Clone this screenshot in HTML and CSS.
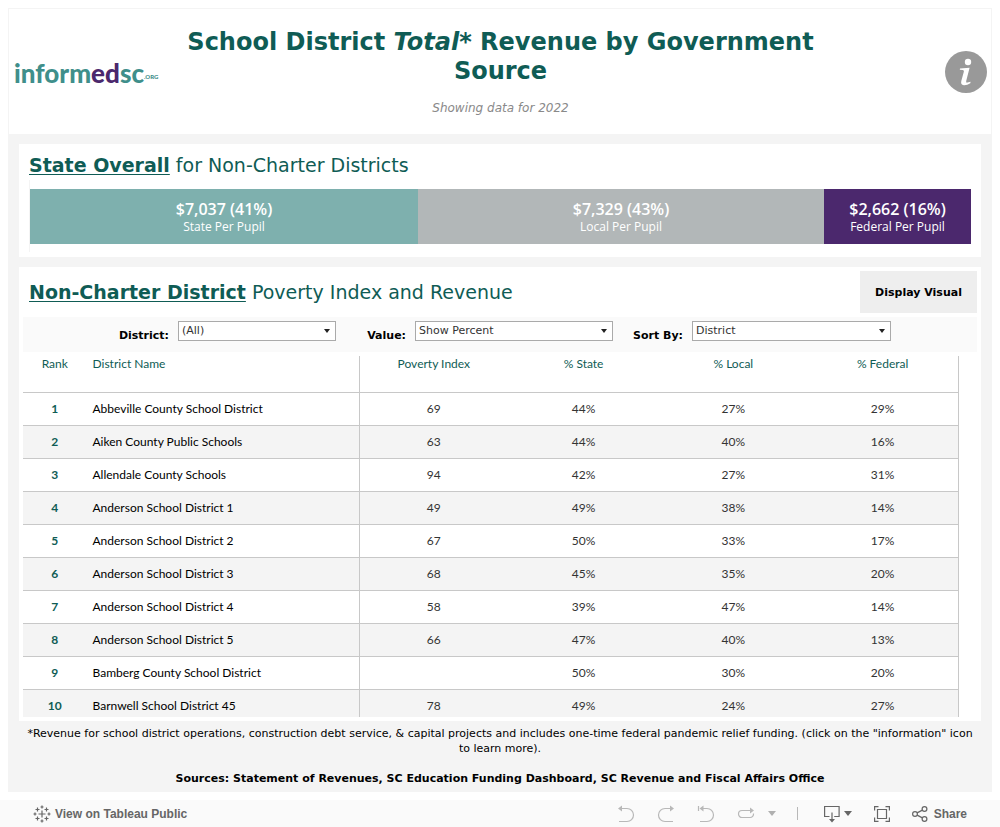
FILE: index.html
```html
<!DOCTYPE html>
<html lang="en">
<head>
<meta charset="utf-8">
<title>School District Total Revenue by Government Source</title>
<link rel="stylesheet" href="styles.css">
</head>
<body class="page">
<main class="dashboard">
  <header class="header">
    <div class="logo"><span>inform</span><span class="logo-accent">ed</span><span>sc</span><small class="logo-org">.ORG</small></div>
    <div class="heading">
      <h1 class="title">School District <em>Total</em>* Revenue by Government Source</h1>
      <p class="subtitle">Showing data for 2022</p>
    </div>
    <button class="info" aria-label="Information">
      <svg width="42" height="42" viewBox="0 0 42 42" aria-hidden="true">
        <circle cx="21" cy="21" r="21" fill="#999"/>
        <circle cx="23" cy="11" r="3.2" fill="#fff"/>
        <path d="M15 17.6L24.6 16.8L21.2 30Q20.8 32 22.4 31.6L25.6 30.8L25.3 32.3Q22 34.4 18.8 34.2Q15.4 33.8 16.3 30L18.9 20.4Q19.2 19 17.6 18.9L14.8 18.8Z" fill="#fff"/>
      </svg>
    </button>
  </header>

  <section class="panel overall">
    <h2 class="panel-title"><strong>State Overall</strong> for Non-Charter Districts</h2>
    <div class="bars">
      <div class="bar bar-state" style="flex-grow:388"><b>$7,037 (41%)</b><span>State Per Pupil</span></div>
      <div class="bar bar-local" style="flex-grow:406"><b>$7,329 (43%)</b><span>Local Per Pupil</span></div>
      <div class="bar bar-federal" style="flex-grow:147"><b>$2,662 (16%)</b><span>Federal Per Pupil</span></div>
    </div>
  </section>

  <section class="panel districts">
    <div class="districts-head">
      <h2 class="panel-title"><strong>Non-Charter District</strong> Poverty Index and Revenue</h2>
      <button class="display-button">Display Visual</button>
    </div>
    <form class="filters">
      <div class="filter filter-district"><label for="district">District:</label><div class="select"><select id="district"><option>(All)</option></select></div></div>
      <div class="filter filter-value"><label for="value">Value:</label><div class="select"><select id="value"><option>Show Percent</option></select></div></div>
      <div class="filter filter-sort"><label for="sort">Sort By:</label><div class="select"><select id="sort"><option>District</option></select></div></div>
    </form>
    <div class="table-scroll">
      <table class="table">
        <colgroup><col class="col-rank"><col class="col-name"><col class="col-num"><col class="col-num"><col class="col-num"><col class="col-num"></colgroup>
        <thead><tr><th>Rank</th><th class="name">District Name</th><th>Poverty Index</th><th>% State</th><th>% Local</th><th>% Federal</th></tr></thead>
        <tbody>
          <tr><td class="rank">1</td><td class="name">Abbeville County School District</td><td>69</td><td>44%</td><td>27%</td><td>29%</td></tr>
          <tr><td class="rank">2</td><td class="name">Aiken County Public Schools</td><td>63</td><td>44%</td><td>40%</td><td>16%</td></tr>
          <tr><td class="rank">3</td><td class="name">Allendale County Schools</td><td>94</td><td>42%</td><td>27%</td><td>31%</td></tr>
          <tr><td class="rank">4</td><td class="name">Anderson School District 1</td><td>49</td><td>49%</td><td>38%</td><td>14%</td></tr>
          <tr><td class="rank">5</td><td class="name">Anderson School District 2</td><td>67</td><td>50%</td><td>33%</td><td>17%</td></tr>
          <tr><td class="rank">6</td><td class="name">Anderson School District 3</td><td>68</td><td>45%</td><td>35%</td><td>20%</td></tr>
          <tr><td class="rank">7</td><td class="name">Anderson School District 4</td><td>58</td><td>39%</td><td>47%</td><td>14%</td></tr>
          <tr><td class="rank">8</td><td class="name">Anderson School District 5</td><td>66</td><td>47%</td><td>40%</td><td>13%</td></tr>
          <tr><td class="rank">9</td><td class="name">Bamberg County School District</td><td></td><td>50%</td><td>30%</td><td>20%</td></tr>
          <tr><td class="rank">10</td><td class="name">Barnwell School District 45</td><td>78</td><td>49%</td><td>24%</td><td>27%</td></tr>
        </tbody>
      </table>
    </div>
  </section>

  <footer class="notes">
    <p>*Revenue for school district operations, construction debt service, &amp; capital projects and includes one-time federal pandemic relief funding. (click on the "information" icon to learn more).</p>
    <p class="sources">Sources: Statement of Revenues, SC Education Funding Dashboard, SC Revenue and Fiscal Affairs Office</p>
  </footer>
</main>

<nav class="toolbar" aria-label="Toolbar">
  <a class="tool tool-public" href="#">
    <svg width="18" height="18" viewBox="0 0 18 18" fill="none" stroke="#666" stroke-width="1.2" aria-hidden="true">
      <path d="M9 5.5v7M5.5 9h7M9 .5v3M7.500 2h3M9 14.500v3M7.500 16h3M2 7.500v3M.5 9h3M16 7.500v3M14.500 9h3M4.500 2.500v4M2.500 4.500h4M13.500 2.500v4M11.500 4.500h4M4.500 11.500v4M2.500 13.500h4M13.500 11.500v4M11.500 13.500h4"/>
    </svg>
    <span>View on Tableau Public</span>
  </a>
  <div class="history">
    <button class="tool" aria-label="Undo"><svg width="18" height="18" viewBox="0 0 18 18" fill="none" stroke="#b8b8b8" stroke-width="1.200"><path d="M3 3.500h7a6.500 6.500 0 0 1 0 13H2"/><path d="M1 3.500l4-3v6z" fill="#b8b8b8" stroke="none"/></svg></button>
    <button class="tool" aria-label="Redo"><svg width="18" height="18" viewBox="0 0 18 18" fill="none" stroke="#b8b8b8" stroke-width="1.200"><path d="M15 3.500H8a6.500 6.500 0 0 0 0 13h8"/><path d="M17 3.500l-4-3v6z" fill="#b8b8b8" stroke="none"/></svg></button>
    <button class="tool" aria-label="Reset"><svg width="18" height="18" viewBox="0 0 18 18" fill="none" stroke="#b8b8b8" stroke-width="1.200"><path d="M1.500 1v5M4 3.500h6a6.500 6.500 0 0 1 0 13H3"/><path d="M2.500 3.500l4-3v6z" fill="#b8b8b8" stroke="none"/></svg></button>
    <button class="tool" aria-label="Refresh"><svg width="18" height="18" viewBox="0 0 18 18" fill="none" stroke="#b8b8b8" stroke-width="1.200"><path d="M14 5.500H5a3.500 3.500 0 0 0-3.500 3.500 3.500 3.500 0 0 0 3.500 3.500h8a3.500 3.500 0 0 0 3.500-4"/><path d="M17 5.500l-4-3v6z" fill="#b8b8b8" stroke="none"/></svg></button>
    <button class="tool tool-narrow" aria-label="Refresh options"><svg width="8" height="5" viewBox="0 0 8 5"><path d="M0 0h8L4 5z" fill="#b0b0b0"/></svg></button>
  </div>
  <span class="divider"></span>
  <div class="actions">
    <button class="tool" aria-label="Download"><svg width="16" height="18" viewBox="0 0 16 18" fill="none" stroke="#666" stroke-width="1.200"><path d="M5.500 11.500h-4.900v-10h14.500v10h-4.900M8 7.500v8"/><path d="M8 17.500l-3-3.500h6z" fill="#666" stroke="none"/></svg><svg width="8" height="5" viewBox="0 0 8 5"><path d="M0 0h8L4 5z" fill="#666"/></svg></button>
    <button class="tool" aria-label="Full screen"><svg width="16" height="16" viewBox="0 0 16 16" fill="none" stroke="#666" stroke-width="1.200"><path d="M.6 4.500V.6h3.900M11.500.6h3.900v3.900M15.400 11.500v3.900h-3.900M4.500 15.400H.6v-3.900M3.500 3.500h9v9h-9z"/></svg></button>
    <button class="tool tool-share"><svg width="16" height="16" viewBox="0 0 16 16" fill="none" stroke="#666" stroke-width="1.200"><circle cx="3" cy="8" r="2.400"/><circle cx="12.500" cy="3" r="2.400"/><circle cx="12.500" cy="13" r="2.400"/><path d="M5.100 6.900l5.300-2.800M5.100 9.100l5.300 2.800"/></svg><span>Share</span></button>
  </div>
</nav>
</body>
</html>
```
FILE: styles.css
```css
* { box-sizing: border-box; }

.page {
  margin: 0;
  height: 100vh;
  display: flex;
  flex-direction: column;
  background: #fff;
  color: #000;
  font-family: "DejaVu Sans", Verdana, sans-serif;
  font-size: 11px;
}

h1, h2, p { margin: 0; }
button { border: 0; padding: 0; background: none; font: inherit; color: inherit; cursor: pointer; }

.dashboard {
  flex: 1;
  min-height: 0;
  margin: 8px;
  display: flex;
  flex-direction: column;
  background: #f4f4f4;
}

.header {
  display: grid;
  grid-template-columns: 144px 1fr 144px;
  align-items: center;
  padding: 19px 4px 18px 5px;
  border: 1px solid #f4f4f4;
  border-bottom: 0;
  background: #fff;
}
.logo {
  display: flex;
  align-items: center;
  padding-top: 2px;
  color: #3f8f8b;
  font: 900 26px/32px Lato, sans-serif;
}
.logo-accent { color: #4b286d; }
.logo-org { margin-top: 8px; font-size: 6px; line-height: 8px; }
.heading { text-align: center; }
.title { color: #0f5c55; font-size: 24px; line-height: 29px; }
.subtitle { margin-top: 14px; color: #898989; font-size: 12px; line-height: 16px; font-style: italic; }
.info { justify-self: end; display: flex; }

.panel { margin: 10px 11px 0; background: #fff; }
.panel-title { color: #0f5c55; font-size: 19px; line-height: 24px; font-weight: 400; }
.panel-title strong { text-decoration: underline; text-decoration-thickness: 1px; text-underline-offset: 2px; }

.overall { padding: 9px 10px 5px; }
.bars {
  display: flex;
  margin-top: 3px;
  padding: 9px 0 8px;
  border-left: 1px solid #f4f4f4;
}
.bar {
  flex-basis: 0;
  display: flex;
  flex-direction: column;
  align-items: center;
  justify-content: center;
  height: 55px;
  padding-top: 2px;
  color: #fff;
  font: 12px/16px "Open Sans", sans-serif;
}
.bar b { font-size: 16px; line-height: 19px; font-weight: 600; }
.bar-state { background: #7eb0ae; }
.bar-local { background: #b2b7b8; }
.bar-federal { background: #4b286d; }

.districts {
  flex: 1;
  min-height: 0;
  display: flex;
  flex-direction: column;
  padding: 4px;
}
.districts-head { display: flex; justify-content: space-between; align-items: center; padding-left: 6px; }
.display-button { width: 117px; height: 42px; background: #eee; font-weight: 700; }

.filters {
  display: flex;
  margin-top: 4px;
  padding: 4px 0 11px;
  background: #fafafa;
}
.filter { display: flex; justify-content: flex-end; align-items: flex-end; gap: 9px; }
.filter-district { flex: 0 0 313px; }
.filter-value { flex: 0 0 277px; }
.filter-sort { flex: 0 0 278px; }
.filter label { font-weight: 700; line-height: 10px; }
.select { position: relative; width: 158px; }
.filter-value .select { width: 198px; }
.filter-sort .select { width: 199px; }
.select select {
  display: block;
  width: 100%;
  height: 20px;
  padding: 0 20px 2px 3px;
  border: 1px solid #aaa;
  border-radius: 0;
  appearance: none;
  background: #fff;
  color: #333;
  font: inherit;
}
.select::after {
  content: "";
  position: absolute;
  top: 8px;
  right: 6px;
  border: 3px solid transparent;
  border-top: 4px solid #222;
  border-bottom: 0;
  pointer-events: none;
}

.table-scroll { flex: 1; min-height: 0; margin-top: 4px; padding-right: 18px; overflow: hidden; }
.table {
  width: 100%;
  border-spacing: 0;
  table-layout: fixed;
  color: #333;
  font: 12px/16px Lato, sans-serif;
  text-align: center;
}
.col-rank { width: 7%; }
.col-name { width: 29%; }
.col-num { width: 16%; }
.table th { height: 37px; padding: 0 2px 0 0; color: #0f5c55; font-weight: 400; vertical-align: top; }
.table td { height: 33px; padding: 0 2px 0 0; }
.table th, .table td { border-bottom: 1px solid #c8c8c8; }
.table .name { padding-left: 4px; border-right: 1px solid #c8c8c8; text-align: left; }
.table td.name { color: #000; }
.table th:last-child, .table td:last-child { border-right: 1px solid #c8c8c8; }
.table .rank { color: #0f5c55; font-weight: 700; }
.table tbody tr:nth-child(even) { background: #f4f4f4; }

.notes { padding: 5px 16px 6px; text-align: center; line-height: 15px; }
.sources { margin-top: 15px; font-weight: 700; }

.toolbar {
  flex: none;
  display: flex;
  align-items: center;
  height: 27px;
  padding: 0 33px;
  background: #fafafa;
  color: #666;
  font: 700 12px/16px "Liberation Sans", Arial, sans-serif;
}
.tool { display: flex; align-items: center; gap: 4px; }
.tool-share { gap: 6px; }
.tool-public { margin-right: auto; color: inherit; text-decoration: none; }
.history { display: flex; gap: 22px; }
.tool-narrow { margin-left: -9px; }
.divider { width: 1px; height: 13px; margin: 0 26px 0 21px; background: #b8b8b8; }
.actions { display: flex; gap: 22px; }
```
